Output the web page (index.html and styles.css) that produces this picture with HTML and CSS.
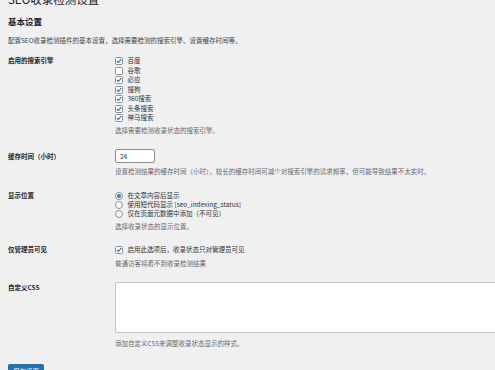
FILE: index.html
```html
<!DOCTYPE html>
<html lang="zh-CN">
<head>
<meta charset="utf-8">
<title>SEO收录检测设置</title>
<link rel="stylesheet" href="styles.css">
</head>
<body>
<div class="wrap">
  <h1 class="page-title">SEO收录检测设置</h1>
  <h2 class="section-title">基本设置</h2>
  <p class="intro">配置SEO收录检测插件的基本设置，选择需要检测的搜索引擎、设置缓存时间等。</p>

  <div class="field-row row-engines">
    <div class="field-label">启用的搜索引擎</div>
    <div class="field-body">
      <div class="options">
        <label class="option"><span class="box checked"><svg width="6" height="6" viewBox="0 0 6 6"><path d="M1.1 3.1 L2.5 4.5 L5 1.4"/></svg></span>百度</label>
        <label class="option"><span class="box"></span>谷歌</label>
        <label class="option"><span class="box checked"><svg width="6" height="6" viewBox="0 0 6 6"><path d="M1.1 3.1 L2.5 4.5 L5 1.4"/></svg></span>必应</label>
        <label class="option"><span class="box checked"><svg width="6" height="6" viewBox="0 0 6 6"><path d="M1.1 3.1 L2.5 4.5 L5 1.4"/></svg></span>搜狗</label>
        <label class="option"><span class="box checked"><svg width="6" height="6" viewBox="0 0 6 6"><path d="M1.1 3.1 L2.5 4.5 L5 1.4"/></svg></span>360搜索</label>
        <label class="option"><span class="box checked"><svg width="6" height="6" viewBox="0 0 6 6"><path d="M1.1 3.1 L2.5 4.5 L5 1.4"/></svg></span>头条搜索</label>
        <label class="option"><span class="box checked"><svg width="6" height="6" viewBox="0 0 6 6"><path d="M1.1 3.1 L2.5 4.5 L5 1.4"/></svg></span>神马搜索</label>
      </div>
      <p class="desc desc-engines">选择需要检测收录状态的搜索引擎。</p>
    </div>
  </div>

  <div class="field-row row-cache">
    <div class="field-label label-cache">缓存时间（小时）</div>
    <div class="field-body">
      <div class="text-input">24</div>
      <p class="desc desc-cache">设置检测结果的缓存时间（小时），较长的缓存时间可减少对搜索引擎的请求频率，但可能导致结果不太实时。</p>
    </div>
  </div>

  <div class="field-row row-position">
    <div class="field-label label-position">显示位置</div>
    <div class="field-body">
      <div class="options radios">
        <label class="option"><span class="radio checked"></span>在文章内容后显示</label>
        <label class="option"><span class="radio"></span>使用短代码显示 [seo_indexing_status]</label>
        <label class="option"><span class="radio"></span>仅在页面元数据中添加（不可见）</label>
      </div>
      <p class="desc desc-position">选择收录状态的显示位置。</p>
    </div>
  </div>

  <div class="field-row row-admin">
    <div class="field-label">仅管理员可见</div>
    <div class="field-body">
      <div class="options">
        <label class="option"><span class="box checked"><svg width="6" height="6" viewBox="0 0 6 6"><path d="M1.1 3.1 L2.5 4.5 L5 1.4"/></svg></span>启用此选项后，收录状态只对管理员可见</label>
      </div>
      <p class="desc desc-admin">普通访客将看不到收录检测结果</p>
    </div>
  </div>

  <div class="field-row row-css">
    <div class="field-label label-css">自定义CSS</div>
    <div class="field-body">
      <div class="textarea"></div>
      <p class="desc desc-css">添加自定义CSS来调整收录状态显示的样式。</p>
    </div>
  </div>

  <div class="submit-row">
    <button class="button-primary">保存设置</button>
  </div>
</div>
</body>
</html>
```

FILE: styles.css
```css
html, body {
  margin: 0;
  padding: 0;
  overflow: hidden;
  background: #f0f0f1;
}
body {
  font-family: "Noto Sans CJK SC", "Noto Sans", sans-serif;
  color: #1d2327;
  font-size: 6.5px;
}
.wrap {
  padding: 0 0 0 8px;
  width: 600px;
}
.page-title {
  margin: -8px 0 0 0;
  font-size: 11.5px;
  line-height: 14px;
  font-weight: 400;
  color: #1d2327;
}
.section-title {
  margin: 10px 0 0 0;
  font-size: 8.5px;
  line-height: 10px;
  font-weight: 700;
}
.intro {
  margin: 8.5px 0 0 0;
  font-size: 6.5px;
  line-height: 10px;
  color: #3c434a;
}
.field-row {
  display: grid;
  grid-template-columns: 107px auto;
  align-items: start;
}
.field-label {
  font-weight: 700;
  font-size: 6.5px;
  line-height: 9.5px;
  color: #1d2327;
}
.field-body {
  display: flex;
  flex-direction: column;
  align-items: flex-start;
}
.options {
  display: flex;
  flex-direction: column;
}
.option {
  height: 9.5px;
  display: flex;
  align-items: center;
  gap: 4.5px;
  white-space: nowrap;
  line-height: 9.5px;
  color: #2c3338;
}
.radios .option {
  height: 9px;
}
.box {
  width: 8px;
  height: 8px;
  box-sizing: border-box;
  border: 1px solid #8c8f94;
  border-radius: 1.5px;
  background: #fff;
  display: flex;
  align-items: center;
  justify-content: center;
  flex: none;
}
.box svg {
  display: block;
  fill: none;
  stroke: #2271b1;
  stroke-width: 1.1;
  stroke-linecap: round;
  stroke-linejoin: round;
}
.radio {
  width: 8px;
  height: 8px;
  box-sizing: border-box;
  border: 1px solid #8c8f94;
  border-radius: 50%;
  background: #fff;
  display: flex;
  align-items: center;
  justify-content: center;
  flex: none;
}
.radio.checked::before {
  content: "";
  width: 3.5px;
  height: 3.5px;
  border-radius: 50%;
  background: #3582c4;
}
.desc {
  margin: 0;
  line-height: 10px;
  color: #646970;
  white-space: nowrap;
}
.row-engines { margin-top: 11.75px; }
.desc-engines { margin-top: 2.25px; }

.row-cache { margin-top: 14px; }
.label-cache { line-height: 14px; }
.text-input {
  width: 40px;
  height: 14px;
  box-sizing: border-box;
  border: 1px solid #8c8f94;
  border-radius: 2px;
  background: #fff;
  padding-left: 4px;
  line-height: 12px;
  color: #2c3338;
}
.desc-cache { margin-top: 3px; }

.row-position { margin-top: 15.25px; }
.label-position { line-height: 9px; }
.desc-position { margin-top: 2.75px; }

.row-admin { margin-top: 13.75px; }
.desc-admin { margin-top: 3.75px; }

.row-css { margin-top: 14px; }
.label-css { padding-top: 1.25px; }
.textarea {
  width: 392px;
  height: 51px;
  box-sizing: border-box;
  border: 1px solid #c3c4c7;
  border-radius: 2px;
  background: #fff;
}
.desc-css { margin-top: 5px; }

.submit-row { margin-top: 16px; }
.button-primary {
  width: 36px;
  height: 15px;
  padding: 0;
  border: 1px solid #2271b1;
  border-radius: 1.5px;
  background: #2271b1;
  color: #fff;
  font-family: inherit;
  font-size: 6.5px;
  line-height: 13px;
}
```
